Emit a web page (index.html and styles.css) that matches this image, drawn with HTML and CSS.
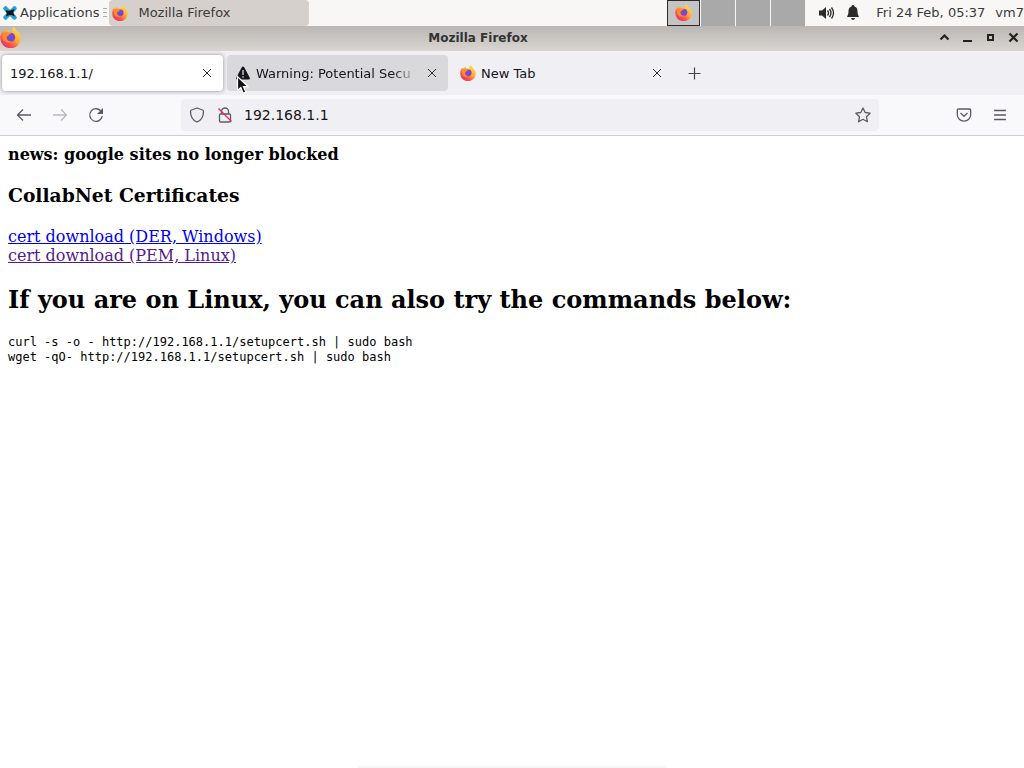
FILE: index.html
```html
<!DOCTYPE html>
<html lang="en">
<head>
    <meta charset="utf-8">
    <title>Mozilla Firefox</title>
    <link rel="stylesheet" href="styles.css">
</head>
<body>
    <!-- Shared icon shapes -->
    <svg class="defs" aria-hidden="true">
        <defs>
            <linearGradient id="flame" x1="0.85" y1="0.1" x2="0.2" y2="0.95">
                <stop offset="0" stop-color="#ffe04a"/>
                <stop offset="0.45" stop-color="#ffa436"/>
                <stop offset="0.75" stop-color="#f8504a"/>
                <stop offset="1" stop-color="#e8306a"/>
            </linearGradient>
            <symbol id="firefox" viewBox="0 0 20 20">
                <path fill="url(#flame)" d="M12.6 0c1.7 1 2.7 2.3 3.2 3.8 2.4 1.500 4 4.200 3.900 7.200A9.700 9.200 0 0 1 .3 11C.2 8 1.200 5.200 2.900 3.200l.8 1.700C4.700 3.500 5.800 2.700 7 2.200c-.2.8 0 1.500.3 2 1.600-.2 3 0 4.200.8.2-1.800.3-3.400 1.100-5z"/>
                <circle cx="10.200" cy="9.800" r="4.300" fill="#7a47d1"/>
                <path fill="#ff8a2a" d="M3.500 5.600c1.600-1 3.200-.9 4.500-.1 1.200 0 2 .3 2.700 1-1.700.2-2.500.9-2.800 1.800-.8.300-1.500.8-1.500 1.900 0 2.300 2 3.800 4.500 3.300-2.800 2.800-8.300.8-8.600-3.600-.1-1.600.4-3.200 1.200-4.300z"/>
            </symbol>
            <symbol id="close" viewBox="0 0 10 10">
                <path d="M1 1l8 8M9 1L1 9" fill="none" stroke="#333" stroke-width="1"/>
            </symbol>
        </defs>
    </svg>

    <!-- Desktop panel -->
    <header class="panel">
        <button class="apps">
            <svg width="16" height="16" viewBox="0 0 16 16">
                <path d="M3.500 3.500l9 9M12.500 3.500l-9 9" fill="none" stroke="#23a3d9" stroke-width="4.500" stroke-linecap="round"/>
                <path d="M3.500 5l3 .8 2.500-.5 3.500-1.300-1.200 3.500 1.500 4-3.300-1.500-3 .3-2.500 1.200.8-3z" fill="#10181c"/>
            </svg>
            Applications
        </button>
        <span class="grip"></span>
        <button class="task">
            <svg width="16" height="16"><use href="#firefox"/></svg>
            Mozilla Firefox
        </button>
        <div class="pager">
            <button class="desk current" aria-label="Workspace 1"><svg width="17" height="17"><use href="#firefox"/></svg></button>
            <button class="desk" aria-label="Workspace 2"></button>
            <button class="desk" aria-label="Workspace 3"></button>
            <button class="desk" aria-label="Workspace 4"></button>
        </div>
        <div class="tray">
            <svg width="17" height="14" viewBox="0 0 17 14">
                <path d="M1 4.500h3L8 1v12L4 9.500H1z" fill="#2b2b2b"/>
                <path d="M9.500 4.500q2 2.500 0 5M11.500 3q3 4 0 8M13.500 1.500q4 5.500 0 11" fill="none" stroke="#2b2b2b" stroke-width="1.300"/>
            </svg>
            <svg width="14" height="15" viewBox="0 0 14 15">
                <path d="M7 0a1.500 1.500 0 0 1 1.500 1.600C10.800 2.300 11.500 4.200 11.500 6.500c0 3 1 4 1.500 5.500H1c.5-1.500 1.500-2.500 1.500-5.500 0-2.300.7-4.200 3-4.900A1.500 1.500 0 0 1 7 0zM5 13h4q-.5 2-2 2t-2-2z" fill="#2b2b2b"/>
            </svg>
        </div>
        <span class="clock">Fri 24 Feb, 05:37</span>
        <span class="user">vm7</span>
    </header>

    <!-- Window title bar -->
    <div class="titlebar">
        <svg class="app-icon" width="21" height="21"><use href="#firefox"/></svg>
        <span class="title">Mozilla Firefox</span>
        <div class="window-buttons">
            <button aria-label="Shade"><svg width="11" height="11" viewBox="0 0 11 11"><path d="M1.500 7.500l4-4 4 4" fill="none" stroke="#222" stroke-width="2.200"/></svg></button>
            <button aria-label="Minimize"><svg width="11" height="11" viewBox="0 0 11 11"><path d="M1 9h9" stroke="#222" stroke-width="2"/></svg></button>
            <button aria-label="Maximize"><svg width="11" height="11" viewBox="0 0 11 11"><path d="M3 3h5v5H3z" fill="none" stroke="#222" stroke-width="2"/></svg></button>
            <button aria-label="Close"><svg width="11" height="11" viewBox="0 0 11 11"><path d="M1.500 1.500l8 8M9.500 1.500l-8 8" stroke="#222" stroke-width="2.200"/></svg></button>
        </div>
    </div>

    <!-- Tabs -->
    <nav class="tabs">
        <div class="tab selected">
            <span class="tab-label">192.168.1.1/</span>
            <button class="tab-close" aria-label="Close tab"><svg width="10" height="10"><use href="#close"/></svg></button>
        </div>
        <div class="tab hovered">
            <svg class="tab-icon" width="16" height="16" viewBox="0 0 16 16">
                <path d="M8 1.500q.8 0 1.200.8l5.600 10.500q.7 1.700-1 1.700H2.200q-1.700 0-1-1.700L6.800 2.300q.4-.8 1.200-.8z" fill="#15141a"/>
                <path d="M8 5v5M8 11.200v1.500" stroke="#dcdcdf" stroke-width="1.300"/>
            </svg>
            <span class="tab-label">Warning: Potential Secu</span>
            <button class="tab-close" aria-label="Close tab"><svg width="10" height="10"><use href="#close"/></svg></button>
            <svg class="pointer" width="14" height="20" viewBox="0 0 14 20">
                <path d="M1.500 1.500v14l3.300-3 2.400 5.700 2.600-1.100-2.400-5.500h4.500z" fill="#111" stroke="#fff" stroke-width="1.200"/>
            </svg>
        </div>
        <div class="tab">
            <svg class="tab-icon" width="16" height="16"><use href="#firefox"/></svg>
            <span class="tab-label">New Tab</span>
            <button class="tab-close" aria-label="Close tab"><svg width="10" height="10"><use href="#close"/></svg></button>
        </div>
        <button class="new-tab" aria-label="New tab">
            <svg width="13" height="13" viewBox="0 0 13 13"><path d="M6.500 0.500v12M0.500 6.500h12" stroke="#444" stroke-width="1.200"/></svg>
        </button>
    </nav>

    <!-- Navigation toolbar -->
    <div class="toolbar">
        <button aria-label="Back"><svg width="16" height="16" viewBox="0 0 16 16"><path d="M15 8H1.500M7 2.500L1.500 8 7 13.500"/></svg></button>
        <button aria-label="Forward" disabled><svg width="16" height="16" viewBox="0 0 16 16"><path d="M1 8h13.500M9 2.500L14.500 8 9 13.500"/></svg></button>
        <button aria-label="Reload"><svg width="16" height="16" viewBox="0 0 16 16"><path d="M13.300 4.500A6.300 6.300 0 1 0 14.300 9"/><path d="M15 1v6H9z" fill="#5b5b66" stroke="none"/></svg></button>
        <div class="urlbar">
            <svg width="16" height="16" viewBox="0 0 16 16"><path d="M8 1l5.500 2q1 .4 1 1.400c0 5-2 8.600-6.500 10.600C3.500 13 1.500 9.400 1.500 4.400q0-1 1-1.400z"/></svg>
            <svg width="16" height="16" viewBox="0 0 16 16"><path d="M4.500 7V4.500a3.500 3.500 0 0 1 7 0V7M3.500 7h9q1 0 1 1v6q0 1-1 1h-9q-1 0-1-1V8q0-1 1-1z"/><path d="M1.500 1.500l13 13" class="slash"/></svg>
            <input type="text" value="192.168.1.1" aria-label="Address">
            <button aria-label="Bookmark this page"><svg width="16" height="16" viewBox="0 0 16 16"><path d="M8 1l2.200 4.500 4.900.7-3.600 3.500.9 5L8 12.300l-4.400 2.400.9-5L.9 6.200l4.900-.7z"/></svg></button>
        </div>
        <button class="pocket" aria-label="Save to Pocket"><svg width="16" height="16" viewBox="0 0 16 16"><path d="M2.500 2h11q1.200 0 1.200 1.200V7.500a6.700 6.700 0 0 1-13.400 0V3.200Q1.300 2 2.500 2zM4.500 6L8 9.300 11.500 6"/></svg></button>
        <button aria-label="Menu"><svg width="14" height="14" viewBox="0 0 14 14"><path d="M1 2.500h12M1 7h12M1 11.500h12"/></svg></button>
    </div>

    <!-- Page content -->
    <main class="page">
        <b>news: google sites no longer blocked</b>
        <h3>CollabNet Certificates</h3>
        <a href="#der">cert download (DER, Windows)</a><br>
        <a class="seen" href="#pem">cert download (PEM, Linux)</a>
        <h2>If you are on Linux, you can also try the commands below:</h2>
<pre>curl -s -o - http://192.168.1.1/setupcert.sh | sudo bash
wget -qO- http://192.168.1.1/setupcert.sh | sudo bash</pre>
    </main>
    <div class="dock-edge"></div>
</body>
</html>
```

FILE: styles.css
```css
* {
    box-sizing: border-box;
}
body {
    margin: 0;
    min-height: 100vh;
    display: flex;
    flex-direction: column;
    background: #fff;
    color: #15141a;
    font-family: "DejaVu Sans", sans-serif;
    font-size: 13px;
    overflow: hidden;
}
button {
    font: inherit;
    color: inherit;
    background: none;
    border: none;
    padding: 0;
    display: flex;
    align-items: center;
}
svg {
    flex-shrink: 0;
}
.defs {
    position: absolute;
    width: 0;
    height: 0;
}

/* Desktop panel */
.panel {
    display: flex;
    align-items: center;
    height: 26px;
    padding-bottom: 1px;
    background: #f8f7f6;
    color: #3a3a3a;
    white-space: nowrap;
}
.apps {
    gap: 2px;
    padding-left: 2px;
}
.grip {
    width: 4px;
    height: 10px;
    margin: 0 2px 0 4px;
    background: repeating-linear-gradient(#aaa 0 1px, transparent 1px 4px);
}
.task {
    gap: 10px;
    width: 200px;
    height: 26px;
    padding-left: 3px;
    border-radius: 4px;
    background: #d5d0cc;
}
.pager {
    display: flex;
    gap: 1px;
    height: 26px;
    margin-left: auto;
}
.desk {
    width: 34px;
    justify-content: center;
    background: #a9a9a9;
}
.desk.current {
    width: 33px;
    border: 1px solid #2b2b2b;
    background: #c4c4c4;
}
.tray {
    display: flex;
    align-items: center;
    gap: 11px;
    padding: 0 16px 0 13px;
}
.user {
    padding-left: 10px;
}

/* Title bar */
.titlebar {
    display: flex;
    align-items: center;
    height: 25px;
    padding-bottom: 2px;
    background: linear-gradient(#b9b6b3, #d9d6d2);
}
.title {
    flex: 1;
    padding-right: 4px;
    text-align: center;
    font-size: 12px;
    font-weight: bold;
    color: #333;
}
.window-buttons {
    display: flex;
    gap: 12px;
    padding-right: 5px;
}

/* Tabs */
.tabs {
    display: flex;
    align-items: center;
    gap: 4px;
    height: 44px;
    padding-left: 2px;
    background: #f0f0f4;
}
.tab {
    position: relative;
    display: flex;
    align-items: center;
    width: 221px;
    height: 36px;
    padding: 0 11px 0 8px;
    border-radius: 4px;
}
.tab.selected {
    background: #fff;
    box-shadow: 0 0 4px rgba(0, 0, 0, 0.4);
}
.tab.hovered {
    background: #d9d9dc;
}
.tab-icon {
    margin-right: 5px;
}
.tab-label {
    flex: 1;
    overflow: hidden;
    white-space: nowrap;
}
.hovered .tab-label {
    mask-image: linear-gradient(to left, transparent, #000 24px);
}
.tab-close {
    margin-left: 10px;
}
.pointer {
    position: absolute;
    left: 9px;
    top: 20px;
}
.new-tab {
    margin-left: 11px;
}

/* Toolbar */
.toolbar {
    display: flex;
    align-items: center;
    gap: 20px;
    height: 41px;
    padding: 0 17px 0 16px;
    background: #f9f9fb;
    border-bottom: 1px solid #ccccd0;
}
.toolbar svg {
    fill: none;
    stroke: #5b5b66;
    stroke-width: 1.3;
    stroke-linejoin: round;
}
.toolbar button:disabled {
    opacity: 0.4;
}
.toolbar .slash {
    stroke: #e22850;
}
.urlbar {
    flex: 1;
    display: flex;
    align-items: center;
    gap: 12px;
    height: 32px;
    margin-left: 57px;
    padding: 0 8px;
    border-radius: 4px;
    background: #f0f0f4;
}
.urlbar input {
    flex: 1;
    min-width: 0;
    padding: 0;
    margin-left: -1px;
    border: none;
    outline: none;
    background: none;
    color: #15141a;
    font-family: "DejaVu Sans", sans-serif;
    font-size: 14px;
}
.pocket {
    margin: 0 1px 0 57px;
}

/* Page content */
.page {
    flex: 1;
    padding: 9px 8px;
    color: #000;
    font-family: "DejaVu Serif", serif;
    font-size: 16px;
    line-height: 19px;
}
.page h3 {
    margin: 20px 0;
    line-height: 23px;
}
.page h2 {
    margin: 20px 0;
    line-height: 30px;
}
.page a {
    color: #0000ee;
}
.page a.seen {
    color: #551a8b;
}
.page pre {
    margin: 0;
    font-family: "DejaVu Sans Mono", monospace;
    font-size: 12px;
    line-height: 15px;
}
.dock-edge {
    width: 30%;
    height: 4px;
    margin: 0 auto;
    background: linear-gradient(#fff, #f4f4f4);
}
```
